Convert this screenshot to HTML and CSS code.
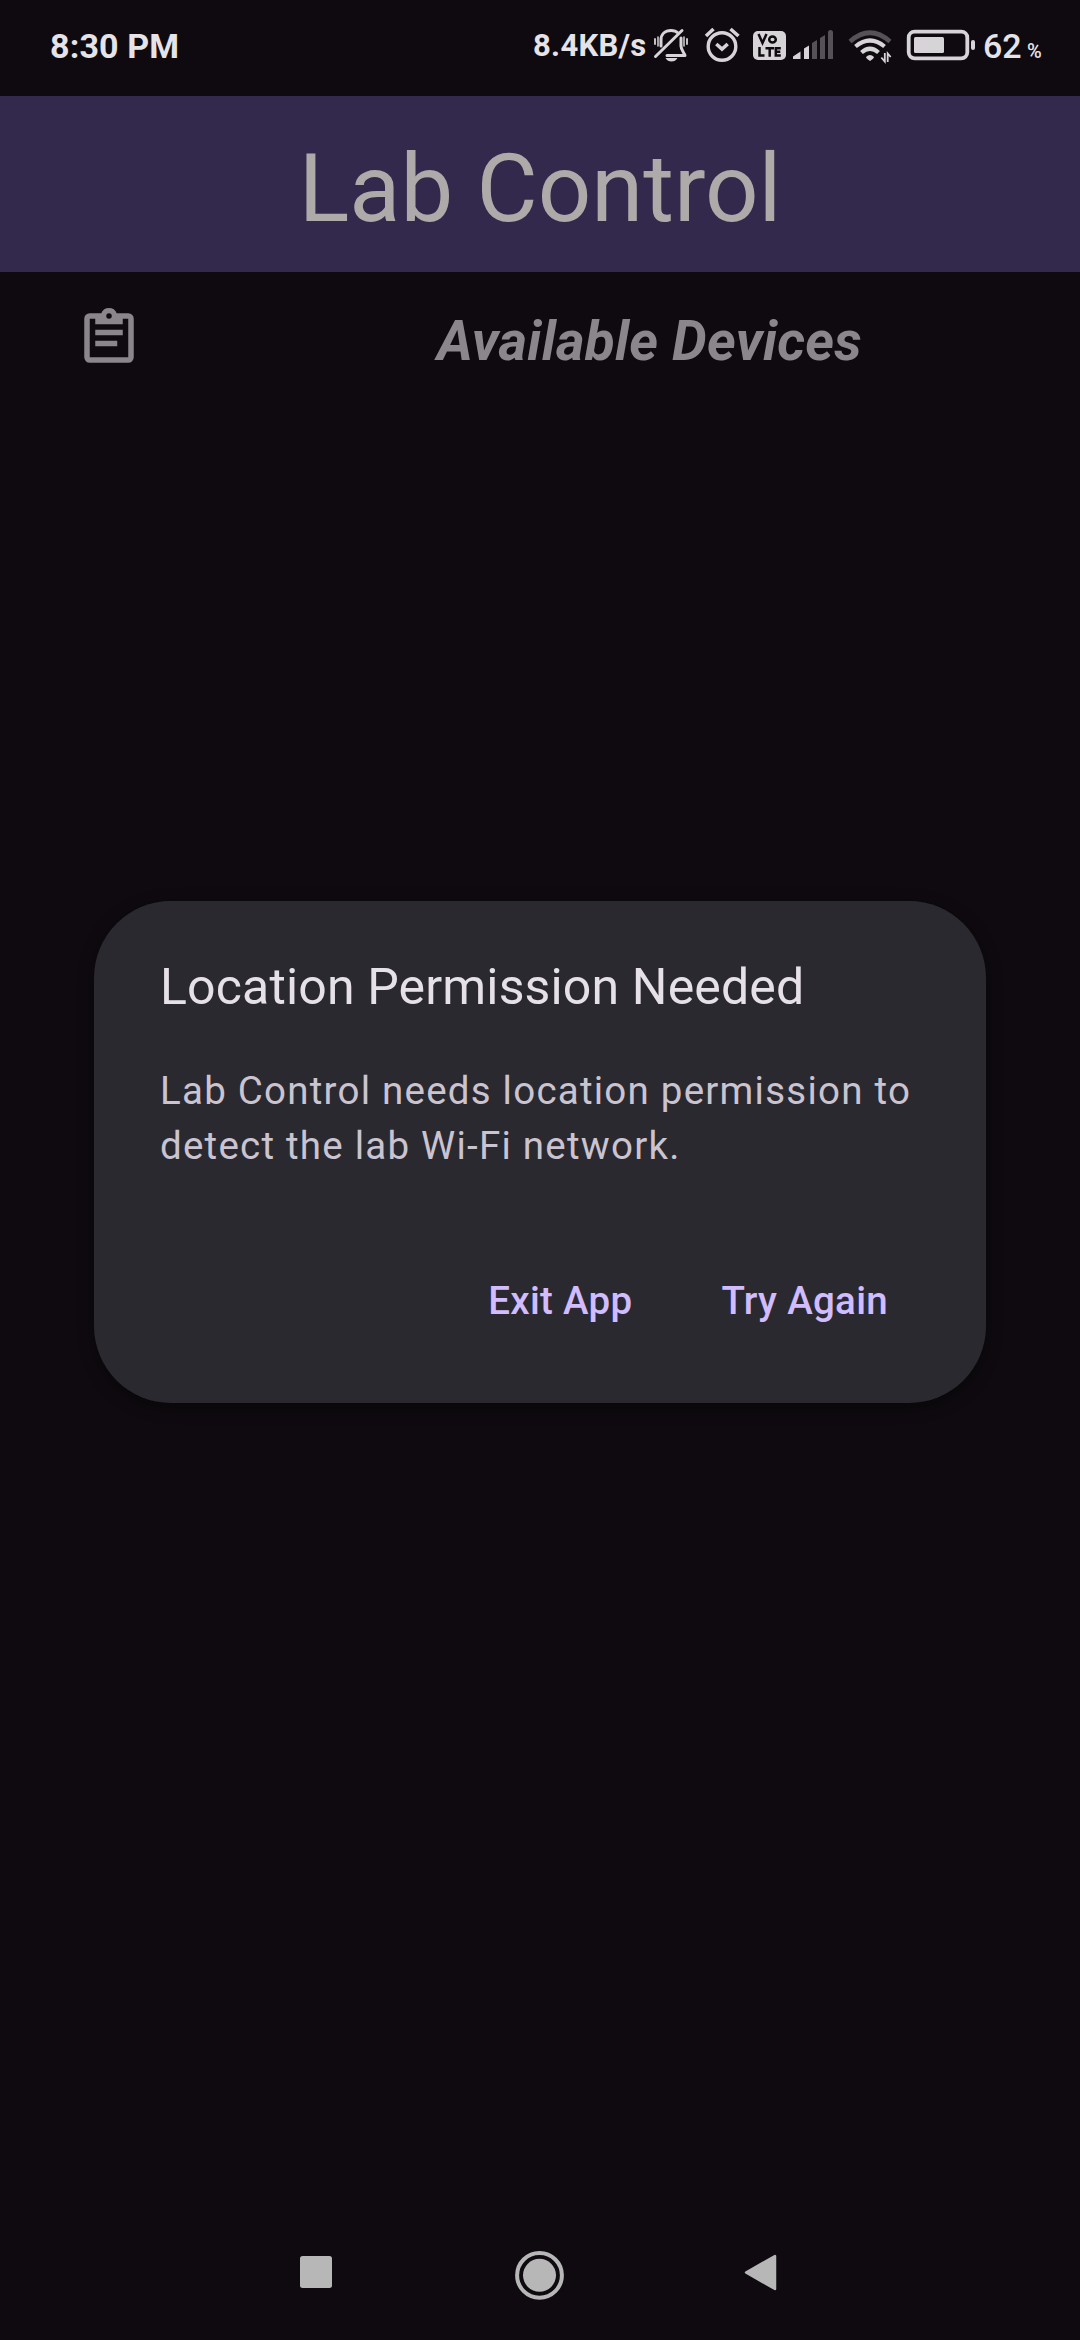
FILE: index.html
```html
<!DOCTYPE html>
<html lang="en">
<head>
<meta charset="utf-8">
<title>Lab Control</title>
<link rel="stylesheet" href="styles.css">
</head>
<body>
<div class="screen">
  <div class="status">
    <span class="clock">8:30 PM</span>
    <span class="speed">8.4KB/s</span>
    <svg class="status-icons" width="332" height="96" viewBox="650 0 332 96" fill="none">
      <!-- muted bell -->
      <g stroke="#d6d4d7" stroke-width="3" stroke-linecap="round" stroke-linejoin="round">
        <path d="M661 46V40C661 34 665 30.500 671 30.500C674 30.500 676 31 678 33M681 38V46C681 50 684 52.500 685 55.500H667"/>
        <path d="M655.500 56.500L682 30.500"/>
        <path d="M655 39v5M687 39v5" stroke-width="1.800"/>
        <path d="M658 37v9M684 37v9" stroke-width="1.500"/>
      </g>
      <path d="M665.500 58h12q-2 3.500-6 3.500t-6-3.500z" fill="#d6d4d7"/>
      <!-- alarm -->
      <g stroke="#d6d4d7" stroke-width="3.400">
        <circle cx="722" cy="46.500" r="13.800"/>
        <path d="M716.300 44l5.700 5 5.700-5M706 36l7.500-7M730.500 29l8 7" stroke-width="3.600"/>
      </g>
      <!-- VoLTE badge -->
      <rect x="753" y="31" width="33" height="29" rx="5" fill="#d6d4d7"/>
      <g stroke="#0e0a0f" stroke-width="2.500">
        <path d="M758.500 34l4 9 4-9"/><ellipse cx="772.500" cy="39.500" rx="3.300" ry="3"/>
        <path d="M759.500 47v8.500h5M765.500 48.200h8.500M769.700 48v8.700M780.800 48.200h-5v7.300h5M775.800 51.800h4.500"/>
      </g>
      <!-- signal -->
      <path d="M793 59v-2.500l7.500-5V59zM804 59V48.500l5-3V59z" fill="#d6d4d7"/>
      <path d="M812 59V43l5-3v19zM820 59V38l5-3v24zM828 59V32.500q0-2.500 2.500-2.500t2.500 2.500V59z" fill="#555257"/>
      <!-- wifi -->
      <path d="M850 41.500Q870 24 890 41.500" stroke="#555257" stroke-width="4.600"/>
      <path d="M855.500 46.500Q870 34.500 884.500 46.500M861.500 52.500Q870 45 878.500 52.500" stroke="#d6d4d7" stroke-width="4.200"/>
      <path d="M866 57q4-4 8 0q0 1.500-4 4q-4-2.500-4-4z" fill="#d6d4d7"/>
      <path d="M884.800 53v8.500l-3.500-4M887.700 62v-8.500l3 3.500" stroke="#d6d4d7" stroke-width="1.800"/>
      <!-- battery -->
      <rect x="908.700" y="31.700" width="58.600" height="26.600" rx="6" stroke="#d6d4d7" stroke-width="3.800"/>
      <rect x="914" y="37" width="30" height="16" rx="1.500" fill="#d6d4d7"/>
      <rect x="971" y="40" width="4" height="10" rx="2" fill="#d6d4d7"/>
    </svg>
    <span class="level">62</span><span class="percent">%</span>
  </div>
  <header class="header"><span>Lab Control</span></header>
  <div class="toolbar">
    <svg class="clipboard" width="66" height="66" viewBox="0 0 24 24" fill="#8b858c" fill-rule="evenodd">
      <path d="M5 3h4.200a3 3 0 0 1 5.600 0H19a2 2 0 0 1 2 2v14a2 2 0 0 1-2 2H5a2 2 0 0 1-2-2V5a2 2 0 0 1 2-2zM5 5v14h14V5h-2v2H7V5zM12 3a1 1 0 1 0 0 2 1 1 0 0 0 0-2z"/>
      <path d="M7 9h10v2H7zM7 13h8v2H7z"/>
    </svg>
    <h1 class="section">Available Devices</h1>
  </div>
  <main class="content">
    <section class="dialog">
      <h2 class="dialog-title">Location Permission Needed</h2>
      <p class="dialog-text">Lab Control needs location permission to<br>detect the lab Wi-Fi network.</p>
      <div class="actions"><button class="exit">Exit App</button><button class="retry">Try Again</button></div>
    </section>
  </main>
  <nav class="nav">
    <svg width="540" height="110" viewBox="270 2220 540 110" fill="#b8b7b8">
      <rect x="300" y="2256" width="32" height="32" rx="2.500"/>
      <circle cx="539.500" cy="2275.300" r="22.400" fill="none" stroke="#b8b7b8" stroke-width="4"/>
      <circle cx="539.500" cy="2275.300" r="16.500"/>
      <path d="M746 2272.500L775 2256V2289z" stroke="#b8b7b8" stroke-width="2.500" stroke-linejoin="round"/>
    </svg>
  </nav>
</div>
</body>
</html>
```
FILE: styles.css
```css
* { box-sizing: border-box; }
body { margin: 0; background: #0e0a0f; font-family: Roboto, sans-serif; }
h1, h2, p { margin: 0; }
svg { display: block; flex: none; }
.screen { width: 1080px; height: 2340px; display: flex; flex-direction: column; overflow: hidden; }

.status { height: 96px; display: flex; color: #e6e3e8; white-space: nowrap; line-height: 92px; }
.clock { width: 533px; padding-left: 50px; font-size: 34px; font-weight: 700; letter-spacing: .15px; }
.speed { width: 117px; font-size: 31px; font-weight: 700; letter-spacing: .3px; }
.level { width: 45px; padding-left: 1px; font-size: 34px; font-weight: 500; }
.percent { font-size: 20px; font-weight: 500; line-height: 102px; }

.header { height: 176px; display: flex; align-items: center; justify-content: center; padding-top: 9px; background: #33294d; color: #aeaaa9; font-size: 94px; line-height: 110px; }
.toolbar { height: 138px; display: flex; padding: 33px 0 0 76px; color: #8b858c; }
.section { margin-left: 295px; font-size: 55px; line-height: 72px; font-weight: 700; font-style: italic; letter-spacing: .22px; white-space: nowrap; }

.content { flex: 1; padding: 491px 94px 0; }
.dialog { height: 502px; padding: 54px 66px 0; border-radius: 77px; background: #2b2930; box-shadow: 0 4px 16px rgba(0, 0, 0, .35); }
.dialog-title { color: #e6e0e9; font-size: 50px; line-height: 64px; font-weight: 400; letter-spacing: .15px; white-space: nowrap; }
.dialog-text { margin-top: 44px; color: #cac4d0; font-size: 38.5px; line-height: 55px; letter-spacing: 1.23px; white-space: nowrap; }
.actions { display: flex; justify-content: flex-end; gap: 89px; margin-top: 100px; padding-right: 32px; }
.actions button { padding: 0; border: 0; background: none; color: #d0bcff; font: 500 38.5px/55px Roboto, sans-serif; letter-spacing: .3px; }
.nav { height: 120px; display: flex; justify-content: center; }
```
